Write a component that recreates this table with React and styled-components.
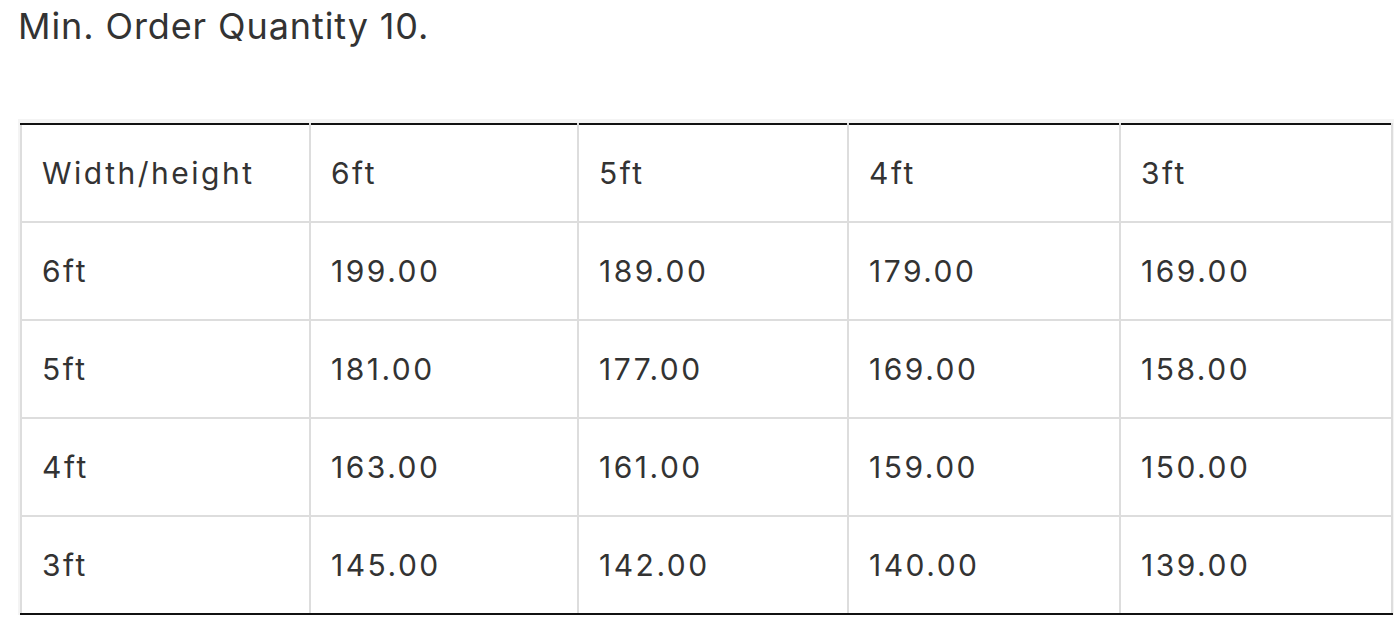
import React from "react";
import styled, { createGlobalStyle } from "styled-components";

const Global = createGlobalStyle`
  html, body { margin: 0; padding: 0; background: #fff; }
  body { font-family: Inter, "Noto Sans", sans-serif; color: #333; }
`;

const Page = styled.div`
  display: flex;
  flex-direction: column;
  align-items: stretch;
  padding: 4px 0 0 18px;
`;

const Heading = styled.p`
  margin: 0 0 71px 0;
  font-size: 36px;
  line-height: 44px;
  font-weight: 400;
  letter-spacing: 0.9px;
  color: #333;
`;

const Frame = styled.div`
  background: #f4f4f4;
  padding: 4px 2px 0 2px;
`;

const Table = styled.table`
  width: 100%;
  border-collapse: collapse;
  table-layout: fixed;
  background: #fff;
`;

const Col = styled.col`
  width: ${(p) => p.$w}px;
`;

const Cell = styled.td`
  border: 2px solid #dddddd;
  padding: 0 20px;
  height: 96px;
  font-size: 30px;
  font-weight: 400;
  letter-spacing: 2.5px;
  color: #333;
  white-space: nowrap;
  tr:first-child > & { border-top: 2px solid #111; }
  tr:last-child > & { border-bottom: 2px solid #111; }
`;

const widths = [289, 268, 270, 272, 272];
const header = ["Width/height", "6ft", "5ft", "4ft", "3ft"];
const rows = [
  ["6ft", "199.00", "189.00", "179.00", "169.00"],
  ["5ft", "181.00", "177.00", "169.00", "158.00"],
  ["4ft", "163.00", "161.00", "159.00", "150.00"],
  ["3ft", "145.00", "142.00", "140.00", "139.00"],
];

export default function App() {
  return (
    <>
      <Global />
      <Page>
        <Heading>Min. Order Quantity 10.</Heading>
        <Frame>
          <Table>
            <colgroup>
              {widths.map((w, i) => (
                <Col key={i} $w={w} />
              ))}
            </colgroup>
            <tbody>
              {[header, ...rows].map((r, i) => (
                <tr key={i}>
                  {r.map((c, j) => (
                    <Cell key={j}>{c}</Cell>
                  ))}
                </tr>
              ))}
            </tbody>
          </Table>
        </Frame>
      </Page>
    </>
  );
}
